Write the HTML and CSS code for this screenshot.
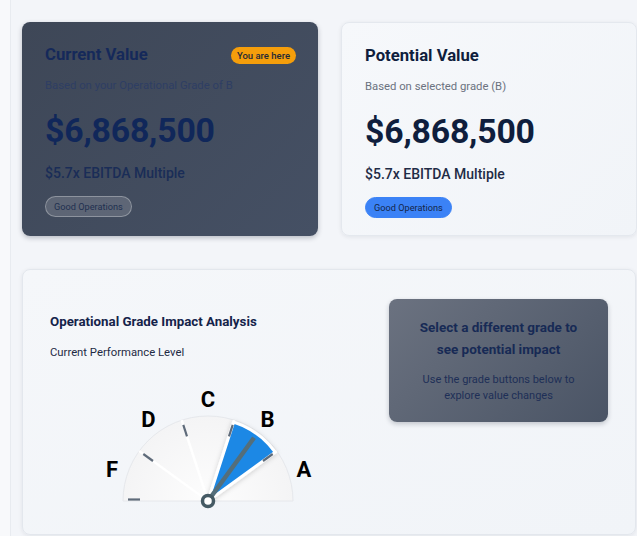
FILE: index.html
```html
<!DOCTYPE html>
<html lang="en">
<head>
<meta charset="utf-8">
<title>Valuation</title>
<link rel="stylesheet" href="styles.css">
</head>
<body>
<div class="page">
  <div class="rail"></div>
  <main class="main">
    <section class="top">
      <div class="card card-current">
        <div class="card-head">
          <h2 class="card-title">Current Value</h2>
          <span class="here">You are here</span>
        </div>
        <p class="card-sub">Based on your Operational Grade of B</p>
        <div class="card-value">$6,868,500</div>
        <div class="card-multiple">$5.7x EBITDA Multiple</div>
        <span class="tag tag-ghost">Good Operations</span>
      </div>
      <div class="card card-potential">
        <div class="card-head">
          <h2 class="card-title">Potential Value</h2>
        </div>
        <p class="card-sub">Based on selected grade (B)</p>
        <div class="card-value">$6,868,500</div>
        <div class="card-multiple">$5.7x EBITDA Multiple</div>
        <span class="tag tag-blue">Good Operations</span>
      </div>
    </section>

    <section class="analysis">
      <div class="analysis-left">
        <h3 class="analysis-title">Operational Grade Impact Analysis</h3>
        <p class="analysis-sub">Current Performance Level</p>
        <svg class="gauge" width="316" height="140" viewBox="0 0 316 140">
          <defs>
            <radialGradient id="seg" cx="158" cy="122" r="86" gradientUnits="userSpaceOnUse">
              <stop offset="0" stop-color="#fdfdfd"/>
              <stop offset="1" stop-color="#f4f4f5"/>
            </radialGradient>
            <filter id="sh" x="-30%" y="-30%" width="160%" height="160%">
              <feDropShadow dx="0" dy="1" stdDeviation="2.5" flood-color="#000" flood-opacity="0.18"/>
            </filter>
          </defs>
          <path d="M73 122 A85 85 0 0 1 243 122 Z" fill="url(#seg)" stroke="#e6e8ec" stroke-width="1"/>
          <g stroke="#ffffff" stroke-width="2.5">
            <line x1="158" y1="122" x2="89.2" y2="72"/>
            <line x1="158" y1="122" x2="131.7" y2="41.2"/>
            <line x1="158" y1="122" x2="184.3" y2="41.2"/>
            <line x1="158" y1="122" x2="226.8" y2="72"/>
          </g>
          <g stroke="#5f6b7a" stroke-width="2.2">
            <line x1="78" y1="120.5" x2="90" y2="120.5"/>
            <line x1="93.3" y1="75" x2="103" y2="82"/>
            <line x1="133.3" y1="45.9" x2="137" y2="57.3"/>
          </g>
          <path d="M158 122 L183.6 43.1 A83 83 0 0 1 225.2 73.2 Z" fill="#1e88e5" stroke="#ffffff" stroke-width="3" stroke-linejoin="miter" filter="url(#sh)"/>
          <g stroke="#5f6b7a" stroke-width="2.2">
            <line x1="179" y1="57.3" x2="182.7" y2="45.9"/>
            <line x1="213" y1="82" x2="222.7" y2="75"/>
          </g>
          <line x1="158" y1="122" x2="204" y2="58.7" stroke="#546e7a" stroke-width="4.5" stroke-linecap="butt"/>
          <circle cx="158" cy="122" r="5.5" fill="#ffffff" stroke="#455a64" stroke-width="3.5"/>
          <g class="gauge-label" text-anchor="middle" dominant-baseline="central">
            <text x="62" y="90">F</text>
            <text x="98.5" y="40">D</text>
            <text x="158" y="20.5">C</text>
            <text x="217.5" y="40">B</text>
            <text x="254" y="90">A</text>
          </g>
        </svg>
      </div>
      <div class="hint">
        <p class="hint-title">Select a different grade to see potential impact</p>
        <p class="hint-text">Use the grade buttons below to explore value changes</p>
      </div>
    </section>
  </main>
</div>
</body>
</html>
```

FILE: styles.css
```css
* { box-sizing: border-box; }

html, body {
  margin: 0;
  padding: 0;
}

body {
  background: #f3f5f9;
  font-family: Roboto, "Noto Sans", "Liberation Sans", sans-serif;
  color: #1a2b4f;
  overflow: hidden;
}

.page {
  display: flex;
  min-height: 536px;
}

.rail {
  width: 11px;
  flex: none;
  background: #f8f9fb;
  border-right: 1px solid #e8ebf0;
}

.main {
  padding: 22px 0 0 11px;
  width: 626px;
  flex: none;
}

.top {
  display: grid;
  grid-template-columns: 296px 296px;
  column-gap: 23px;
}

.card {
  height: 214px;
  border-radius: 8px;
  padding: 22px 23px 20px;
  display: flex;
  flex-direction: column;
  align-items: flex-start;
}

.card-current {
  background: linear-gradient(135deg, #3e4757 0%, #455064 100%);
  box-shadow: 0 2px 5px rgba(15, 23, 42, 0.25);
}

.card-potential {
  background: linear-gradient(135deg, #f6f8fb 0%, #f1f4f8 100%);
  border: 1px solid #e4e8ee;
  box-shadow: 0 1px 4px rgba(15, 23, 42, 0.08);
}

.card-head {
  width: 100%;
  display: flex;
  align-items: center;
  justify-content: space-between;
  height: 22px;
}

.card-title {
  margin: 0;
  font-size: 16.7px;
  font-weight: 700;
  line-height: 22px;
  color: #15295a;
}

.card-potential .card-title { color: #0f1e3d; }

.here {
  background: #f59e0b;
  color: #1f2937;
  font-size: 9.5px;
  font-weight: 500;
  line-height: 17px;
  height: 17px;
  padding: 0 6px;
  border-radius: 9px;
  margin-right: -1px;
}

.card-sub {
  margin: 12px 0 0;
  font-size: 11.3px;
  line-height: 16px;
  color: #2e3e64;
}

.card-potential .card-sub { color: #6b7280; }

.card-value {
  margin-top: 17px;
  font-size: 33.8px;
  font-weight: 700;
  line-height: 40px;
  color: #10275a;
  letter-spacing: -0.2px;
}

.card-potential .card-value { color: #0f1e3d; }

.card-multiple {
  margin-top: 12px;
  font-size: 14px;
  font-weight: 500;
  line-height: 20px;
  color: #1a2d57;
}

.card-potential .card-multiple { color: #1f2c46; }

.tag {
  margin-top: 13px;
  height: 21px;
  line-height: 19px;
  font-size: 9.2px;
  padding: 0 8px;
  border-radius: 11px;
  color: #1f3050;
}

.tag-ghost {
  background: rgba(255, 255, 255, 0.15);
  border: 1px solid rgba(255, 255, 255, 0.3);
}

.tag-blue {
  background: #3b82f6;
  border: 1px solid #3b82f6;
  color: #14264a;
}

.analysis {
  margin-top: 33px;
  width: 614px;
  height: 266px;
  border: 1px solid #e3e7ed;
  border-radius: 8px;
  background: linear-gradient(160deg, #f5f7fa 0%, #f1f4f8 100%);
  box-shadow: 0 1px 4px rgba(15, 23, 42, 0.08);
  padding: 28px 27px;
  display: grid;
  grid-template-columns: 316px 219px;
  column-gap: 23px;
  align-items: start;
}

.analysis-left {
  display: flex;
  flex-direction: column;
}

.analysis-title {
  margin: 15px 0 0;
  font-size: 13.3px;
  font-weight: 700;
  line-height: 18px;
  color: #14234a;
}

.analysis-sub {
  margin: 14px 0 0;
  font-size: 11.3px;
  line-height: 16px;
  color: #1e2a44;
}

.gauge {
  display: block;
  margin-top: 18px;
}

.gauge-label {
  font-family: Roboto, "Liberation Sans", sans-serif;
  font-size: 22px;
  font-weight: 700;
  fill: #000000;
}

.hint {
  margin-top: 1px;
  height: 123px;
  border-radius: 8px;
  background: linear-gradient(135deg, #6b7280 0%, #4a5465 100%);
  box-shadow: 0 2px 5px rgba(15, 23, 42, 0.22);
  padding: 17px 20px 0;
  text-align: center;
}

.hint-title {
  margin: 0;
  font-size: 13.5px;
  font-weight: 700;
  line-height: 22px;
  color: #172a55;
}

.hint-text {
  margin: 12px 0 0;
  font-size: 11px;
  line-height: 16px;
  color: #1e2f57;
}
```
